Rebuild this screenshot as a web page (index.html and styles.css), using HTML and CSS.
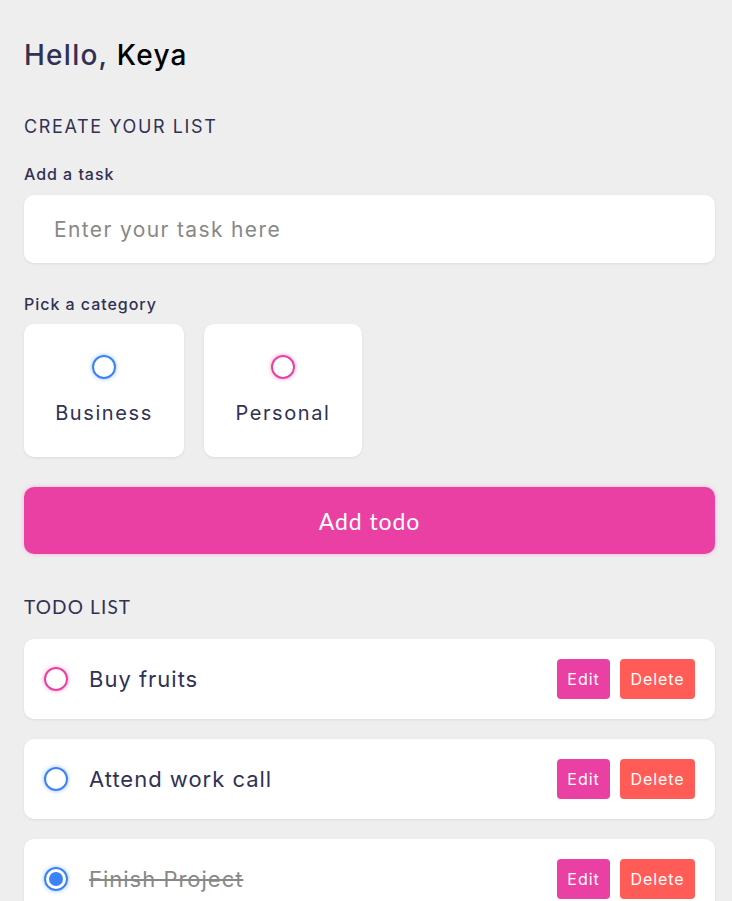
FILE: index.html
```html
<!DOCTYPE html>
<html lang="en">
<head>
<meta charset="utf-8">
<title>Todo</title>
<link rel="stylesheet" href="styles.css">
</head>
<body>
<main class="app">
  <h1 class="greeting">Hello, <span class="name">Keya</span></h1>

  <h2 class="section-title">CREATE YOUR LIST</h2>
  <label class="field-label" for="task">Add a task</label>
  <input class="task-input" id="task" type="text" placeholder="Enter your task here">

  <p class="field-label cat-label">Pick a category</p>
  <div class="categories">
    <label class="cat-card">
      <span class="bubble business"></span>
      <span class="cat-name">Business</span>
    </label>
    <label class="cat-card">
      <span class="bubble personal"></span>
      <span class="cat-name">Personal</span>
    </label>
  </div>

  <button class="add-btn" type="button">Add todo</button>

  <h2 class="section-title alt">TODO LIST</h2>
  <ul class="todo-list">
    <li class="todo-item">
      <span class="bubble personal"></span>
      <span class="todo-text">Buy fruits</span>
      <div class="actions">
        <button class="btn edit" type="button">Edit</button>
        <button class="btn delete" type="button">Delete</button>
      </div>
    </li>
    <li class="todo-item">
      <span class="bubble business"></span>
      <span class="todo-text">Attend work call</span>
      <div class="actions">
        <button class="btn edit" type="button">Edit</button>
        <button class="btn delete" type="button">Delete</button>
      </div>
    </li>
    <li class="todo-item done">
      <span class="bubble business checked"></span>
      <span class="todo-text">Finish Project</span>
      <div class="actions">
        <button class="btn edit" type="button">Edit</button>
        <button class="btn delete" type="button">Delete</button>
      </div>
    </li>
  </ul>
</main>
</body>
</html>
```

FILE: styles.css
```css
* { box-sizing: border-box; }

html, body {
  margin: 0;
  background: #eeeeee;
}

body {
  font-family: "Inter", "Open Sans", sans-serif;
  color: #313154;
}

.app {
  padding: 38px 17px 40px 24px;
  display: flex;
  flex-direction: column;
}

.greeting {
  margin: 0;
  font-size: 28px;
  line-height: 34px;
  font-weight: 500;
  letter-spacing: 0.045em;
  color: #313154;
}

.greeting .name { color: #000; }

.section-title {
  margin: 44px 0 0;
  font-size: 18px;
  line-height: 22px;
  font-weight: 400;
  letter-spacing: 0.09em;
  color: #313154;
}

.section-title.alt {
  margin-top: 42px;
  font-family: "Lato", sans-serif;
  font-size: 19px;
  letter-spacing: 0.06em;
}

.field-label {
  display: block;
  margin: 26px 0 0;
  font-size: 16px;
  line-height: 20px;
  font-weight: 500;
  letter-spacing: 0.06em;
  color: #313154;
}

.cat-label { margin-top: 31px; }

.task-input {
  margin-top: 11px;
  height: 68px;
  width: 100%;
  border: none;
  border-radius: 10px;
  background: #fff;
  box-shadow: 0 1px 3px rgba(0, 0, 0, 0.08);
  padding: 0 30px;
  font-family: inherit;
  font-size: 21px;
  letter-spacing: 0.065em;
  color: #313154;
  outline: none;
}

.task-input::placeholder { color: #888; }

.categories {
  margin-top: 10px;
  display: flex;
  gap: 20px;
}

.cat-card {
  width: 160px;
  height: 133px;
  background: #fff;
  border-radius: 10px;
  box-shadow: 0 1px 3px rgba(0, 0, 0, 0.08);
  display: flex;
  flex-direction: column;
  align-items: center;
  padding-top: 31px;
}

.cat-card + .cat-card { width: 158px; }

.cat-name {
  margin-top: 22px;
  font-size: 20px;
  line-height: 24px;
  letter-spacing: 0.08em;
}

.bubble {
  display: inline-block;
  width: 24px;
  height: 24px;
  border-radius: 50%;
  border: 2px solid;
  flex: none;
  position: relative;
}

.bubble.business {
  border-color: #3a82f6;
  box-shadow: 0 0 4px rgba(58, 130, 246, 0.5);
}

.bubble.personal {
  border-color: #ea40a4;
  box-shadow: 0 0 4px rgba(234, 64, 164, 0.5);
}

.bubble.checked::after {
  content: "";
  position: absolute;
  inset: 3px;
  border-radius: 50%;
  background: #3a82f6;
}

.add-btn {
  margin-top: 30px;
  height: 67px;
  width: 100%;
  border: none;
  border-radius: 10px;
  background: #ea40a4;
  box-shadow: 0 0 4px rgba(234, 64, 164, 0.35);
  color: #fff;
  font-family: "Lato", sans-serif;
  font-size: 23px;
  letter-spacing: 0.04em;
  cursor: pointer;
}

.todo-list {
  list-style: none;
  margin: 21px 0 0;
  padding: 0;
  display: flex;
  flex-direction: column;
  gap: 20px;
}

.todo-item {
  height: 80px;
  background: #fff;
  border-radius: 10px;
  box-shadow: 0 1px 3px rgba(0, 0, 0, 0.08);
  display: flex;
  align-items: center;
  padding: 0 20px;
}

.todo-text {
  margin-left: 21px;
  flex: 1;
  font-size: 22px;
  letter-spacing: 0.045em;
}

.done .todo-text {
  color: #888;
  text-decoration: line-through;
}

.actions {
  display: flex;
  gap: 10px;
}

.btn {
  height: 40px;
  border: none;
  border-radius: 4px;
  color: #fff;
  font-family: inherit;
  font-size: 16px;
  letter-spacing: 0.06em;
  padding: 0;
  cursor: pointer;
}

.btn.edit { width: 53px; background: #ea40a4; }
.btn.delete { width: 75px; background: #ff5c58; }
```
